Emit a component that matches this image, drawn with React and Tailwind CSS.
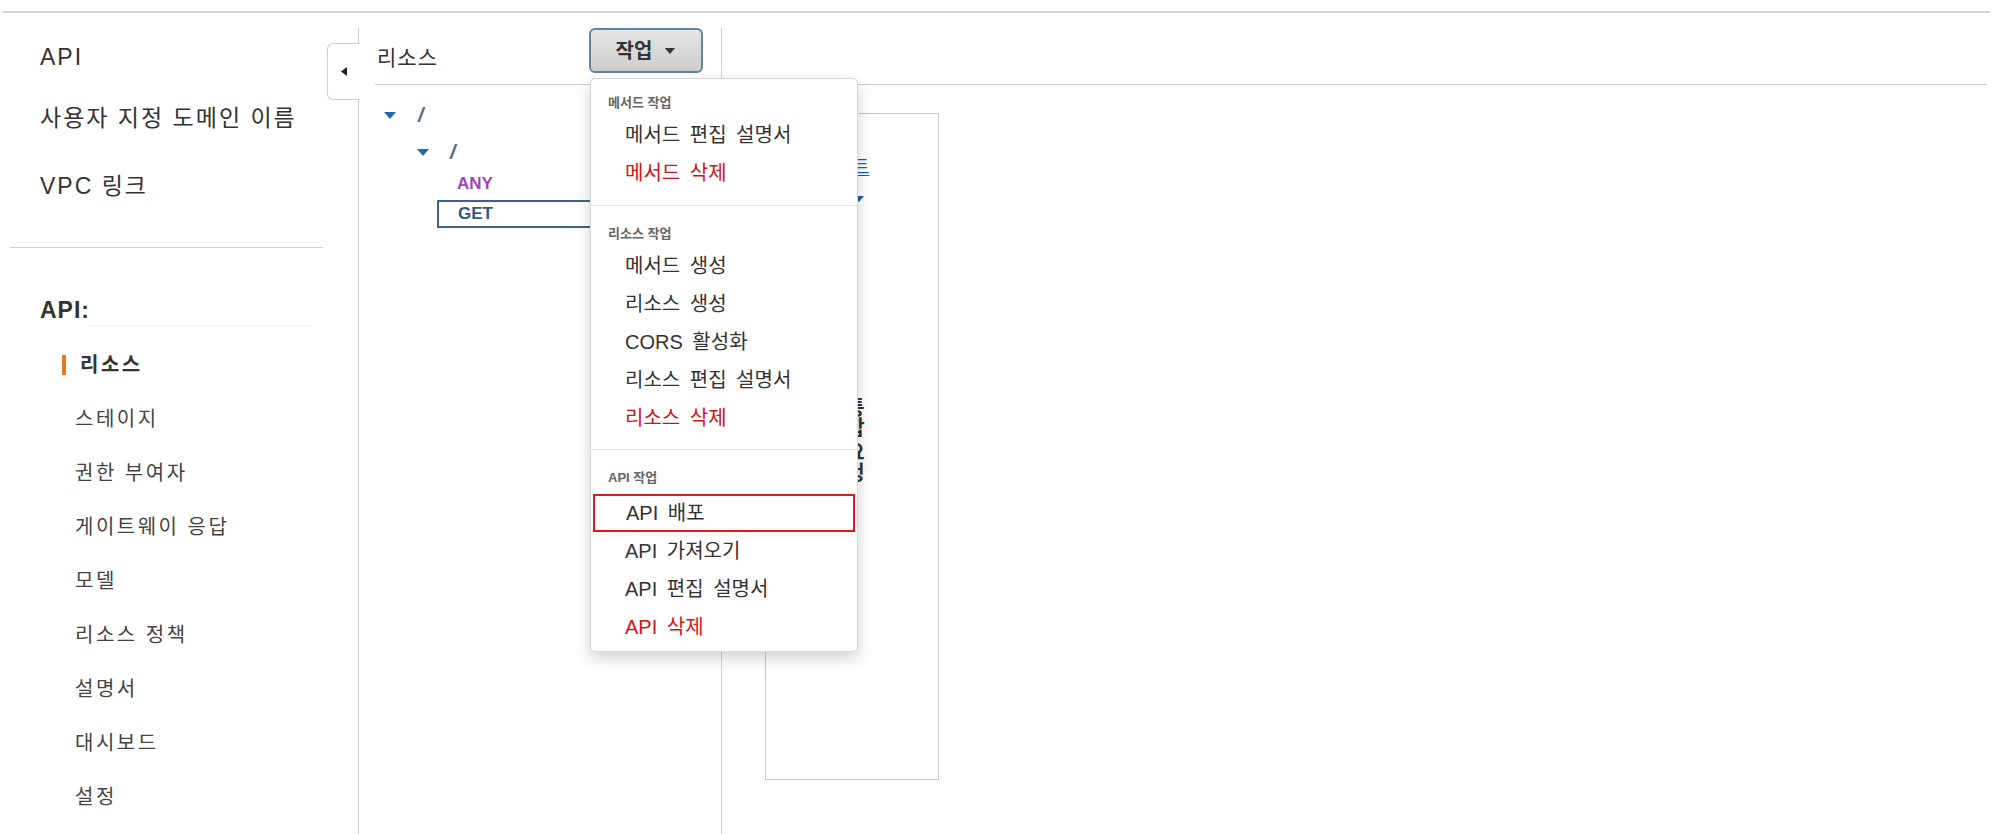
import React from 'react';

const topLinks = ['API', '사용자 지정 도메인 이름', 'VPC 링크'];
const subLinks = ['스테이지', '권한 부여자', '게이트웨이 응답', '모델', '리소스 정책', '설명서', '대시보드', '설정'];

const menu = [
  {
    title: '메서드 작업',
    wrap: 'pt-[14px] pb-[13px]',
    items: [
      { label: '메서드 편집 설명서' },
      { label: '메서드 삭제', danger: true }
    ]
  },
  {
    title: '리소스 작업',
    wrap: 'pt-[18px] pb-[12px] border-t border-[#e2e2e2]',
    items: [
      { label: '메서드 생성' },
      { label: '리소스 생성' },
      { label: 'CORS 활성화' },
      { label: '리소스 편집 설명서' },
      { label: '리소스 삭제', danger: true }
    ]
  },
  {
    title: 'API 작업',
    wrap: 'pt-[18px] pb-[7px] border-t border-[#e2e2e2]',
    first: 'mt-[6px]',
    items: [
      { label: 'API 배포', boxed: true },
      { label: 'API 가져오기' },
      { label: 'API 편집 설명서' },
      { label: 'API 삭제', danger: true }
    ]
  }
];

const Caret = ({ color = '#2a64ad', w = 12, h = 7 }) => (
  <svg width={w} height={h} viewBox="0 0 12 7">
    <path d="M0 0h12L6 7z" fill={color} />
  </svg>
);

const ActionMenu = () => (
  <div className="absolute left-[231px] top-[50px] w-[268px] h-[574px] bg-white border border-[#d8d8d8] rounded-[5px] shadow-[0_6px_16px_rgba(0,0,0,0.18)] z-10">
    {menu.map((sec, i) => (
      <div key={i} className={sec.wrap}>
        <div className="h-[20px] leading-[20px] pl-[17px] text-[13px] font-bold text-[#666]">{sec.title}</div>
        <div className={sec.first || 'mt-[3px]'}>
          {sec.items.map(it =>
            it.boxed ? (
              <div key={it.label} className="mx-[2px] h-[38px] border-2 border-[#e8141c] pl-[31px] flex items-center text-[20px] text-[#333] [word-spacing:4px]">
                {it.label}
              </div>
            ) : (
              <div
                key={it.label}
                className={
                  it.danger
                    ? 'h-[38px] pl-[34px] flex items-center text-[20px] text-[#d0121b] [word-spacing:4px]'
                    : 'h-[38px] pl-[34px] flex items-center text-[20px] text-[#333] [word-spacing:4px]'
                }
              >
                {it.label}
              </div>
            )
          )}
        </div>
      </div>
    ))}
  </div>
);

const SideNav = () => (
  <aside className="relative w-[359px] shrink-0 border-r border-[#d2d2d2]">
    <div className="pt-[14px] pl-[40px] text-[23px] text-[#333] tracking-[2px]">
      <div className="h-[30px] leading-[30px]">{topLinks[0]}</div>
      <div className="h-[30px] leading-[30px] mt-[31px]">{topLinks[1]}</div>
      <div className="h-[30px] leading-[30px] mt-[38px]">{topLinks[2]}</div>
    </div>
    <div className="mt-[46px] ml-[10px] w-[313px] h-px bg-[#cfcfcf]" />
    <div className="mt-[47px] pl-[40px] h-[30px] leading-[30px] text-[23px] font-bold text-[#333] tracking-[1px]">API:</div>
    <div className="ml-[88px] w-[225px] h-[2px] bg-[#f7f7f7]" />
    <div className="mt-[23px] flex flex-col gap-[24px] text-[20px] text-[#444] tracking-[2.5px]">
      <div className="h-[30px] flex items-center pl-[62px]">
        <span className="w-[4px] h-[20px] bg-[#e07a1f]" />
        <span className="ml-[14px] font-bold text-[#333]">리소스</span>
      </div>
      {subLinks.map(s => (
        <div key={s} className="h-[30px] leading-[30px] pl-[75px]">{s}</div>
      ))}
    </div>
    <div className="absolute left-[327px] top-[15px] w-[33px] h-[57px] bg-white border border-r-0 border-[#cfcfcf] rounded-l-[6px] flex items-center justify-center">
      <svg width="6" height="9" viewBox="0 0 6 9">
        <path d="M6 0v9L0 4.5z" fill="#222" />
      </svg>
    </div>
  </aside>
);

const ResourcePanel = () => (
  <section className="relative w-[363px] shrink-0 border-r border-[#d2d2d2]">
    <div className="ml-[16px] h-[57px] border-b border-[#d0d0d0] flex justify-between pr-[18px]">
      <div className="mt-[16px] pl-[2px] h-[28px] leading-[28px] text-[21px] tracking-[1px] text-[#333]">리소스</div>
      <button className="w-[114px] h-[45px] rounded-[6px] border-2 border-[#6483a6] bg-gradient-to-b from-[#e6e6e6] to-[#cdcdcd] flex items-center justify-center gap-[12px] text-[20px] font-bold text-[#333]">
        작업
        <Caret color="#333" w={12} h={6} />
      </button>
    </div>
    <div className="pt-[16px]">
      <div className="h-[28px] flex items-center pl-[25px]">
        <Caret />
        <span className="ml-[22px] text-[20px] italic font-bold text-[#4a6a90]">/</span>
      </div>
      <div className="mt-[9px] h-[28px] flex items-center pl-[58px]">
        <Caret />
        <span className="ml-[21px] text-[20px] italic font-bold text-[#4a6a90]">/</span>
      </div>
      <div className="mt-[4px] h-[28px] leading-[28px] pl-[98px] text-[17px] font-bold text-[#a23fbf]">ANY</div>
      <div className="mt-[2px] ml-[78px] w-[269px] h-[28px] border-2 border-[#3a6591] pl-[19px] flex items-center text-[17px] font-bold text-[#2f5a88]">
        GET
      </div>
    </div>
    <ActionMenu />
  </section>
);

const MethodPanel = () => (
  <main className="flex-1">
    <div className="h-[57px] mr-[6px] border-b border-[#d0d0d0]" />
    <div className="mt-[28px] ml-[43px] w-[174px] h-[667px] border border-[#c9c9c9] flex flex-col items-start">
      <div className="mt-[40px] ml-[51px] h-[28px] leading-[28px] text-[19px] text-[#1e5fa8] underline">테스트</div>
      <div className="mt-[14px] ml-[88px] h-[6px] flex">
        <Caret color="#1e5fa8" w={10} h={6} />
      </div>
      <div className="mt-[195px] ml-[78px] h-[100px] text-[20px] leading-[20px] font-bold text-[#333] [writing-mode:vertical-rl]">
        통합 요청
      </div>
    </div>
  </main>
);

export default function App() {
  return (
    <div className="relative w-[1993px] h-[834px] overflow-hidden bg-white font-['Liberation_Sans','Noto_Sans_CJK_KR',sans-serif] text-[#333]">
      <div className="pt-[11px] px-[3px]">
        <div className="h-[2px] bg-[#d4d4d4]" />
      </div>
      <div className="flex mt-[15px] h-[808px]">
        <SideNav />
        <ResourcePanel />
        <MethodPanel />
      </div>
    </div>
  );
}
